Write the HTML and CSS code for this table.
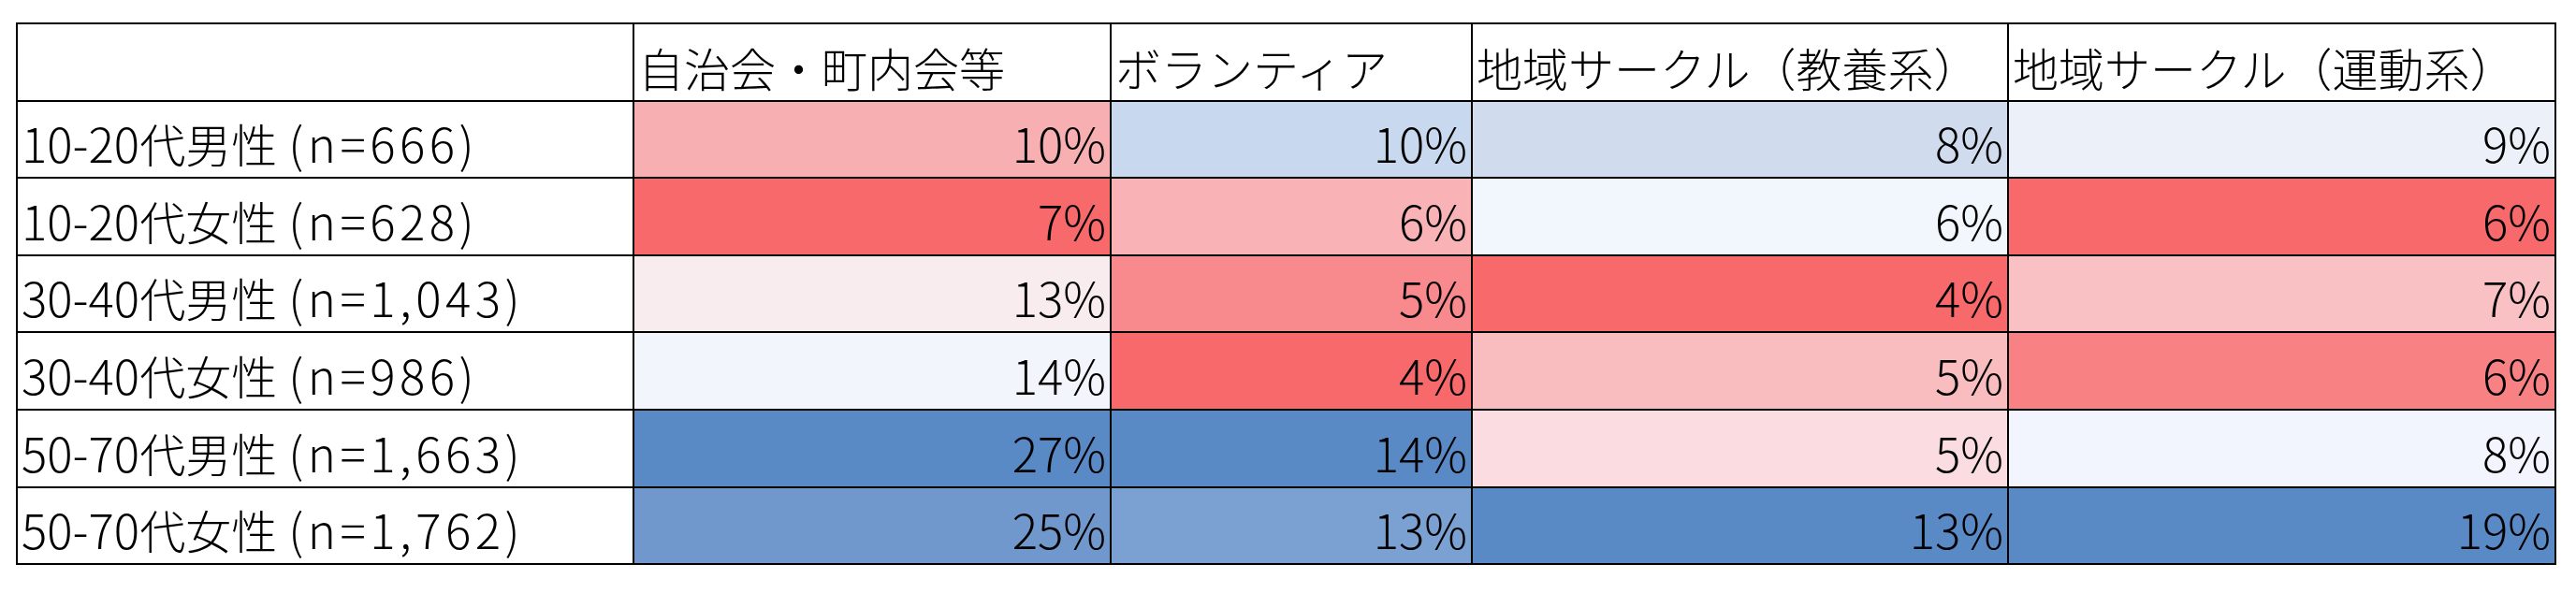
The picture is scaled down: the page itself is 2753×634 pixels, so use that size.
FILE: index.html
```html
<!DOCTYPE html>
<html lang="ja">
<head>
<meta charset="utf-8">
<title>地域活動への参加率</title>
<link rel="stylesheet" href="styles.css">
</head>
<body>
<div class="sheet">
  <div class="cell head"></div>
  <div class="cell head">自治会・町内会等</div>
  <div class="cell head">ボランティア</div>
  <div class="cell head">地域サークル（教養系）</div>
  <div class="cell head">地域サークル（運動系）</div>

  <div class="cell label"><span class="lat">10-20</span>代男性<span class="lat gap">(n=666)</span></div>
  <div class="cell num" style="background:#F7AFB2">10%</div>
  <div class="cell num" style="background:#C8D8EE">10%</div>
  <div class="cell num" style="background:#D0DCEE">8%</div>
  <div class="cell num" style="background:#EBF0F9">9%</div>

  <div class="cell label"><span class="lat">10-20</span>代女性<span class="lat gap">(n=628)</span></div>
  <div class="cell num" style="background:#F8696B">7%</div>
  <div class="cell num" style="background:#F9B3B6">6%</div>
  <div class="cell num" style="background:#F2F6FD">6%</div>
  <div class="cell num" style="background:#F8696B">6%</div>

  <div class="cell label"><span class="lat">30-40</span>代男性<span class="lat gap">(n=1,043)</span></div>
  <div class="cell num" style="background:#F9ECEF">13%</div>
  <div class="cell num" style="background:#F88A8D">5%</div>
  <div class="cell num" style="background:#F8696B">4%</div>
  <div class="cell num" style="background:#F9C1C4">7%</div>

  <div class="cell label"><span class="lat">30-40</span>代女性<span class="lat gap">(n=986)</span></div>
  <div class="cell num" style="background:#F3F5FC">14%</div>
  <div class="cell num" style="background:#F8696B">4%</div>
  <div class="cell num" style="background:#F9BDC0">5%</div>
  <div class="cell num" style="background:#F88184">6%</div>

  <div class="cell label"><span class="lat">50-70</span>代男性<span class="lat gap">(n=1,663)</span></div>
  <div class="cell num" style="background:#5A8AC6">27%</div>
  <div class="cell num" style="background:#5A8AC6">14%</div>
  <div class="cell num" style="background:#FBDDE1">5%</div>
  <div class="cell num" style="background:#F2F5FD">8%</div>

  <div class="cell label"><span class="lat">50-70</span>代女性<span class="lat gap">(n=1,762)</span></div>
  <div class="cell num" style="background:#7098CC">25%</div>
  <div class="cell num" style="background:#7BA0D2">13%</div>
  <div class="cell num" style="background:#5A8AC6">13%</div>
  <div class="cell num" style="background:#5A8AC6">19%</div>
</div>
</body>
</html>
```

FILE: styles.css
```css
html, body {
  margin: 0;
  padding: 0;
  background: #ffffff;
}

body {
  font-family: "Noto Sans CJK JP", "Noto Sans", sans-serif;
  font-weight: 300;
  color: #000000;
}

.sheet {
  margin: 24px 0 0 17px;
  display: grid;
  grid-template-columns: 657px 508px 384px 571px 583px;
  grid-template-rows: repeat(7, 80.6px);
  gap: 2px;
  padding: 2px;
  width: max-content;
  background: #000000;
}

.cell {
  background: #ffffff;
  font-size: 49px;
  line-height: normal;
  display: flex;
  align-items: flex-end;
  white-space: nowrap;
}

.head {
  padding: 0 4px;
  justify-content: flex-start;
}

.label {
  padding: 0 4px;
  justify-content: flex-start;
  align-items: baseline;
  align-content: flex-end;
  flex-wrap: wrap;
}

.lat {
  font-size: 51px;
}

.gap {
  margin-left: 12px;
  letter-spacing: 4.5px;
}

.num {
  padding: 0 4px;
  font-size: 51px;
  justify-content: flex-end;
}
```
